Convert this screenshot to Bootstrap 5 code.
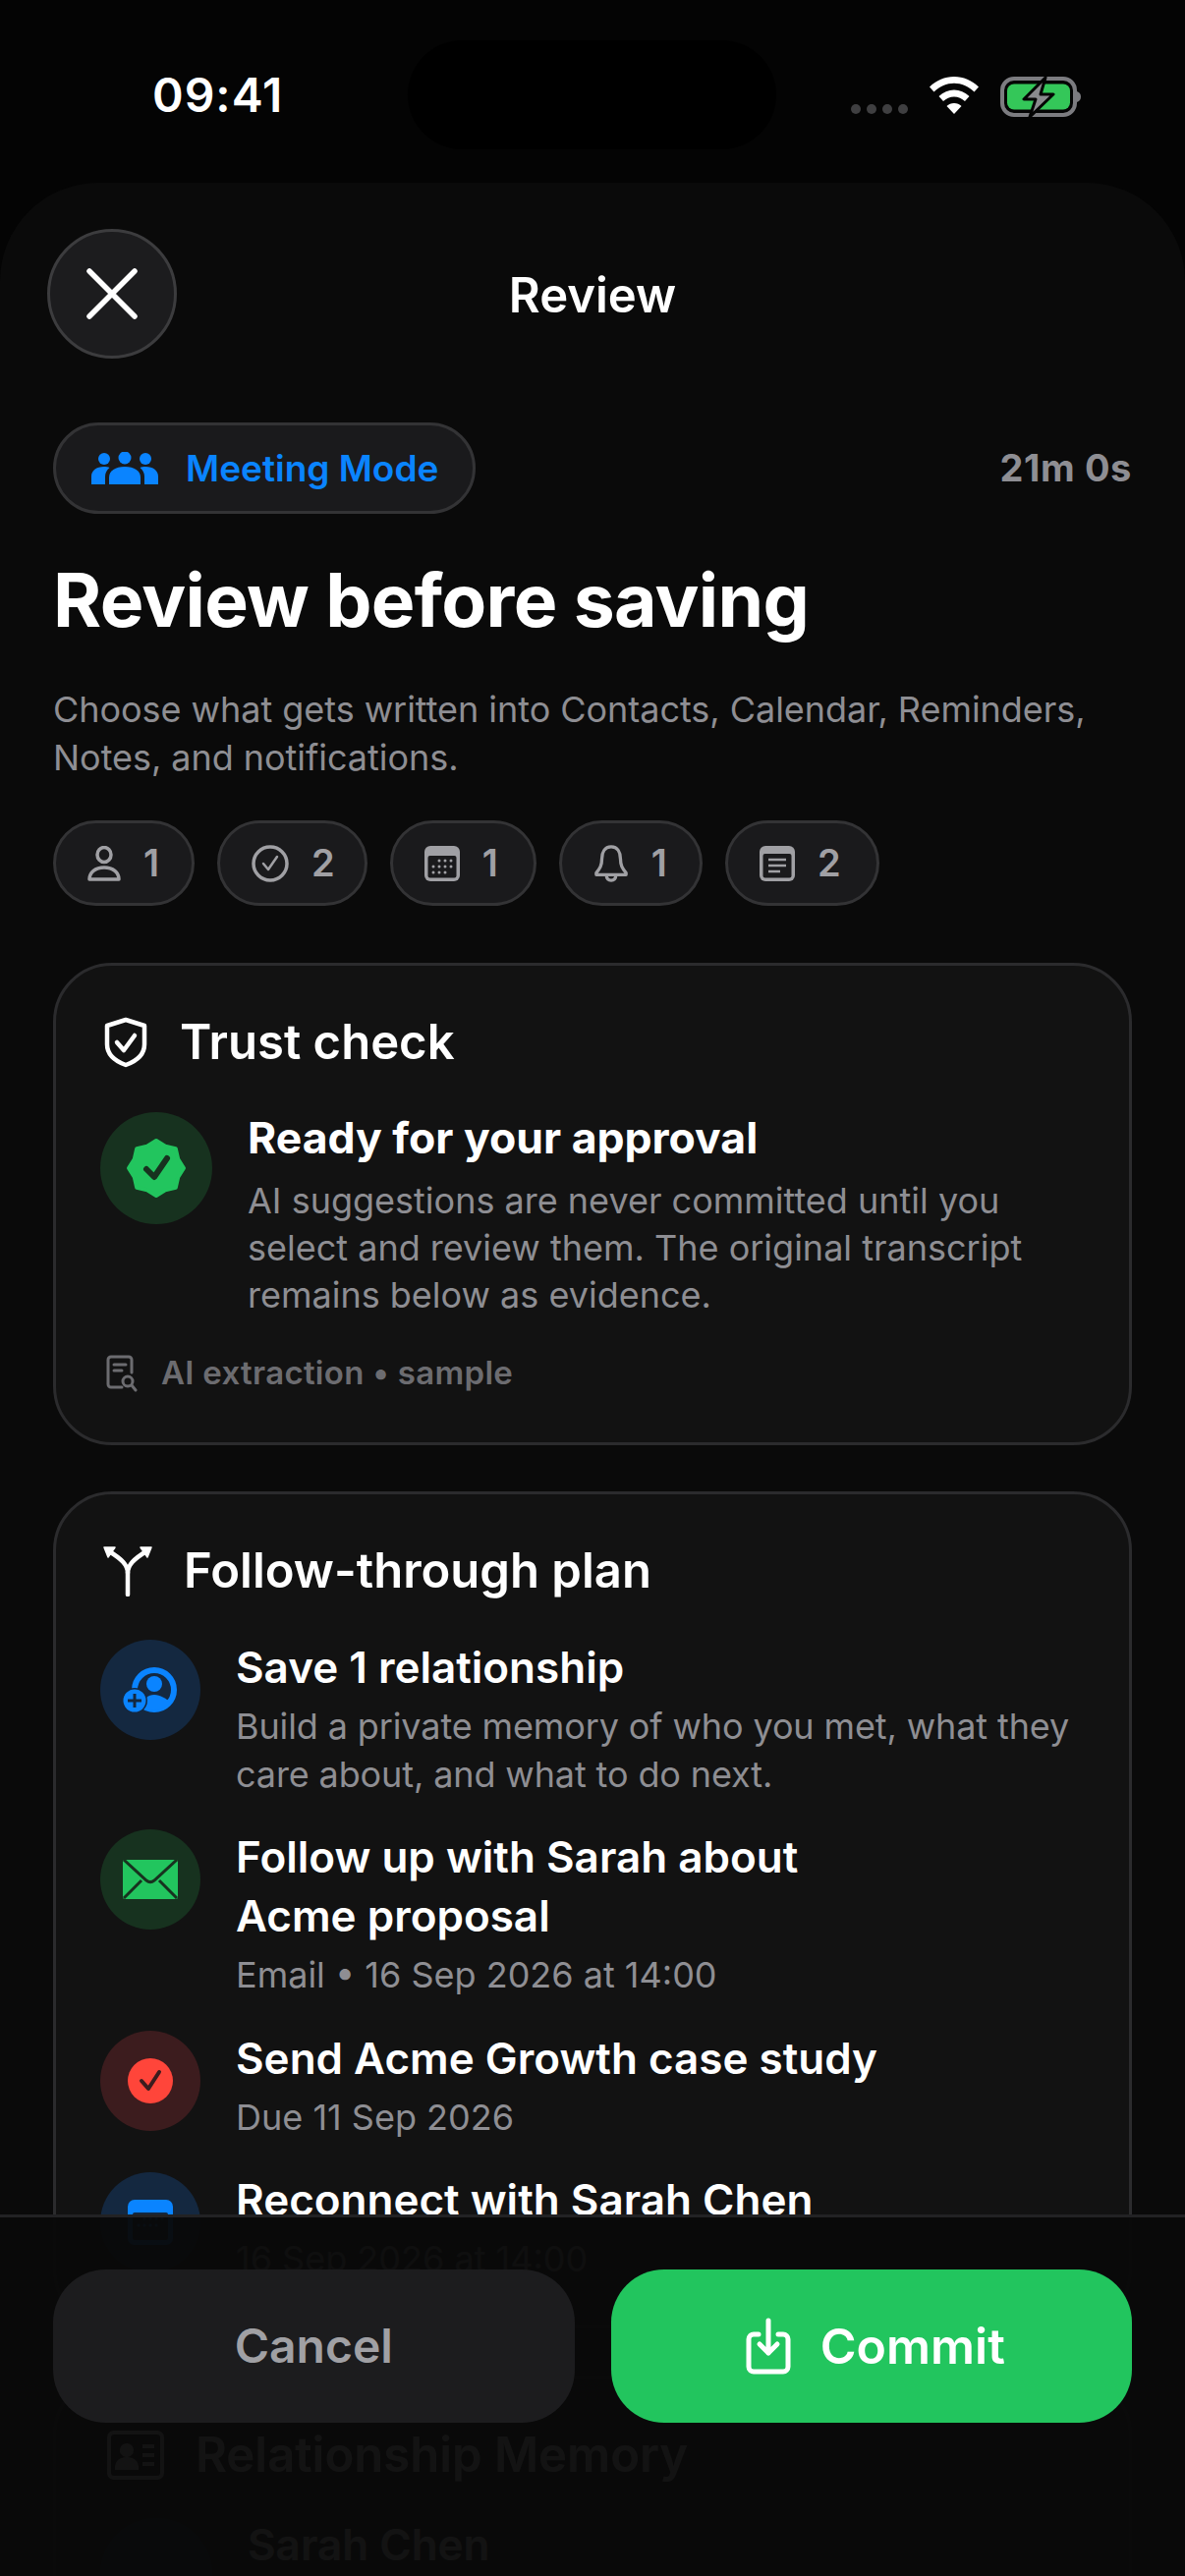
<!DOCTYPE html>
<html lang="en">
<head>
    <meta charset="UTF-8">
    <meta name="viewport" content="width=device-width, initial-scale=1.0">
    <title>Review</title>
    <link href="https://cdn.jsdelivr.net/npm/bootstrap@5.3.1/dist/css/bootstrap.min.css" rel="stylesheet">
    <style>
        html, body { height: 100%; margin: 0; background: #040404; }
        body { font-family: Inter, "Liberation Sans", sans-serif; color: #fff; }
        .app-frame { position: relative; height: 2622px; overflow: hidden; background: #040404; }
        .status-row { height: 186px; padding: 77px 106px 0 155px; align-items: flex-start; }
        .status-time { font-size: 48px; font-weight: 600; line-height: 40px; letter-spacing: 1px; }
        .island { position: absolute; left: 415px; top: 41px; width: 375px; height: 111px; border-radius: 56px; background: #000; }
        .status-icons { gap: 22px; margin-top: 1px; }
        .sheet { background: #0a0a0a; border-radius: 100px 100px 0 0; padding: 47px 54px 0; min-height: 2436px; }
        .sheet-head { position: relative; height: 132px; }
        .close-round { width: 132px; height: 132px; margin-left: -6px; border-radius: 50%; background: #1c1c1e; border: 3px solid #3c3c3e; padding: 0; }
        .sheet-title { position: absolute; left: 0; right: 0; top: 40px; text-align: center; font-size: 49px; line-height: 56px; font-weight: 600; }
        .mode-row { margin-top: 65px; }
        .mode-pill { height: 93px; width: 430px; padding: 0 36px; gap: 28px; border-radius: 47px; background: #1a1a1c; border: 3px solid #333335; color: #0a84ff; font-size: 37px; font-weight: 600; white-space: nowrap; }
        .timer-text { font-size: 38px; font-weight: 700; color: #8e8e93; letter-spacing: 0.6px; }
        .main-heading { margin: 45px 0 0 0; font-size: 75px; line-height: 86px; font-weight: 700; letter-spacing: -0.7px; color: #fff; }
        .sub-copy { margin: 44px 0 0 0; font-size: 36px; line-height: 48.5px; color: #8e8e93; letter-spacing: -0.04px; }
        .chip-row { margin-top: 40px; gap: 23px; }
        .count-chip { height: 87px; padding: 0 33px 0 32px; gap: 23px; border-radius: 44px; background: #1a1a1c; border: 3px solid #333335; color: #a0a0a4; font-size: 38px; font-weight: 600; }
        .chip-snug { padding-right: 30px; }
        .chip-roomy { padding-right: 36px; }
        .panel { background: #121212; border: 3px solid #2b2b2d; border-radius: 60px; padding: 46px 48px 0; }
        .panel-one { margin-top: 58px; height: 491px; }
        .panel-two { margin-top: 47px; height: 852px; }
        .panel-three { margin-top: 48px; height: 400px; }
        .panel-head { height: 64px; gap: 32px; font-size: 49px; font-weight: 600; white-space: nowrap; }
        .ready-row { margin-top: 39px; margin-left: -3px; gap: 36px; }
        .tint-round { flex: none; border-radius: 50%; display: flex; align-items: center; justify-content: center; }
        .round-lg { width: 114px; height: 114px; }
        .round-md { width: 102px; height: 102px; }
        .tint-green { background: #17321f; }
        .tint-blue { background: #142840; }
        .tint-red { background: #3c1c1e; }
        .ready-title { font-size: 44.5px; line-height: 52px; font-weight: 700; }
        .ready-copy { margin-top: 14px; font-size: 36px; line-height: 48px; color: #8e8e93; letter-spacing: 0; }
        .source-row { margin-top: 31px; gap: 24px; padding-left: 3px; font-size: 33px; font-weight: 600; color: #6c6c70; letter-spacing: 0.3px; }
        .plan-list { margin-top: 38px; margin-left: -3px; gap: 32px; }
        .plan-item { gap: 36px; }
        .plan-text { margin-top: -2px; }
        .plan-title { font-size: 44px; line-height: 60px; font-weight: 600; }
        .plan-copy { margin-top: 6px; font-size: 36px; line-height: 48.5px; color: #8e8e93; letter-spacing: 0; white-space: nowrap; }
        .copy-tight { letter-spacing: -0.12px; }
        .memory-list { margin-top: 32px; }
        .memory-name { line-height: 50px; margin-top: 2px; }
        .action-bar { position: absolute; left: 0; right: 0; bottom: 0; height: 368px; padding: 53px 54px 0; gap: 37px; background: rgba(9, 9, 9, 0.96); border-top: 3px solid #222224; }
        .action-btn { flex: 1 1 0; height: 156px; border: 0; border-radius: 54px; font-size: 50px; font-weight: 600; }
        .action-cancel { background: #1c1c1e; color: #a0a0a4; font-size: 48px; }
        .action-cancel:hover { background: #1c1c1e; color: #a0a0a4; }
        .action-commit { background: #22c55e; color: #fff; gap: 30px; }
        .action-commit:hover { background: #22c55e; color: #fff; }
    </style>
</head>

<body>
    <div class="app-frame">
        <div class="island"></div>
        <div class="status-row d-flex justify-content-between">
            <div class="status-time">09:41</div>
            <div class="status-icons d-flex align-items-start">
                <svg width="58" height="40" viewBox="0 0 58 40" fill="#3f3f41"><circle cx="5" cy="33" r="5"/><circle cx="21" cy="33" r="5"/><circle cx="37" cy="33" r="5"/><circle cx="53" cy="33" r="5"/></svg>
                <svg width="50" height="38" viewBox="0 0 50 38" fill="#fff"><path d="M25 0C15.500 0 7 3.800 0 10.500l4.500 5C10.500 9.700 17.500 6.700 25 6.700s14.500 3 20.500 8.800l4.500-5C43 3.800 34.500 0 25 0z"/><path d="M25 13.500c-5.800 0-11 2.300-15.500 6.500l4.500 5c3-2.800 6.800-4.600 11-4.600s8 1.800 11 4.600l4.500-5c-4.500-4.200-9.700-6.500-15.500-6.500z"/><path d="M25 27c-3 0-5.500 1-7.500 3L25 38l7.500-8c-2-2-4.500-3-7.500-3z"/></svg>
                <svg width="82" height="42" viewBox="0 0 82 42"><rect x="2" y="2" width="74" height="37" rx="12" fill="none" stroke="#7c7c80" stroke-width="4"/><rect x="7" y="7.500" width="64" height="26" rx="7" fill="#34c759"/><path d="M78 15c3 1 4 3 4 5.500S81 25 78 26z" fill="#7c7c80"/><path d="M46 1 24 23h12l-6 18 24-23H41z" fill="#8a8a8e" stroke="#040404" stroke-width="3" stroke-linejoin="round"/></svg>
            </div>
        </div>

        <div class="sheet">
            <div class="sheet-head">
                <button class="close-round d-flex align-items-center justify-content-center" type="button" aria-label="Close">
                    <svg width="54" height="54" viewBox="0 0 54 54" fill="none" stroke="#fff" stroke-width="5.500" stroke-linecap="round"><path d="M4 4l46 46M50 4 4 50"/></svg>
                </button>
                <div class="sheet-title">Review</div>
            </div>

            <div class="mode-row d-flex align-items-center justify-content-between">
                <div class="mode-pill d-flex align-items-center">
                    <svg class="flex-shrink-0" width="68" height="34" viewBox="0 0 68 34" fill="#0a84ff"><circle cx="13" cy="7" r="6"/><circle cx="34" cy="6" r="6.500"/><circle cx="55" cy="7" r="6"/><path d="M0 33v-8c0-6 5-10 13-10 2 0 4 .3 5.500 1-3 2.500-4.500 5.500-4.500 9v8z"/><path d="M68 33v-8c0-6-5-10-13-10-2 0-4 .3-5.500 1 3 2.500 4.500 5.500 4.500 9v8z"/><path d="M18 33v-7c0-7 6.500-11 16-11s16 4 16 11v7z"/></svg>
                    <span>Meeting Mode</span>
                </div>
                <div class="timer-text">21m 0s</div>
            </div>

            <h1 class="main-heading">Review before saving</h1>
            <p class="sub-copy mb-0">Choose what gets written into Contacts, Calendar, Reminders,<br>Notes, and notifications.</p>

            <div class="chip-row d-flex">
                <div class="count-chip d-flex align-items-center">
                    <svg width="34" height="36" viewBox="0 0 34 36" fill="none" stroke="#a0a0a4" stroke-width="3.500"><ellipse cx="17" cy="9" rx="7" ry="7.500"/><path d="M2 34c0-7 6-12 15-12s15 5 15 12z" stroke-linejoin="round"/></svg>
                    <span>1</span>
                </div>
                <div class="count-chip chip-snug d-flex align-items-center">
                    <svg width="38" height="38" viewBox="0 0 38 38" fill="none" stroke="#a0a0a4"><circle cx="19" cy="19" r="17" stroke-width="3.500"/><path d="M12 19l5 6 9-13" stroke-width="2.500" stroke-linecap="round" stroke-linejoin="round"/></svg>
                    <span>2</span>
                </div>
                <div class="count-chip chip-roomy d-flex align-items-center">
                    <svg width="36" height="36" viewBox="0 0 36 36"><rect width="36" height="36" rx="6" fill="#a0a0a4"/><rect x="3.500" y="10" width="29" height="22.500" rx="2" fill="#1a1a1c"/><g fill="#a0a0a4"><circle cx="15" cy="15" r="1.500"/><circle cx="21" cy="15" r="1.500"/><circle cx="27" cy="15" r="1.500"/><circle cx="9" cy="21" r="1.500"/><circle cx="15" cy="21" r="1.500"/><circle cx="21" cy="21" r="1.500"/><circle cx="27" cy="21" r="1.500"/><circle cx="9" cy="27" r="1.500"/><circle cx="15" cy="27" r="1.500"/><circle cx="21" cy="27" r="1.500"/></g></svg>
                    <span>1</span>
                </div>
                <div class="count-chip d-flex align-items-center">
                    <svg width="36" height="40" viewBox="0 0 38 40" fill="none" stroke="#a0a0a4" stroke-width="3.500" stroke-linejoin="round"><path d="M19 2c-7 0-10 6-10 13 0 7-2 10-6 15v2h32v-2c-4-5-6-8-6-15 0-7-3-13-10-13z"/><path d="M14 33c0 3 2 5 5 5s5-2 5-5"/></svg>
                    <span>1</span>
                </div>
                <div class="count-chip chip-roomy d-flex align-items-center">
                    <svg width="36" height="36" viewBox="0 0 36 36"><rect width="36" height="36" rx="6" fill="#a0a0a4"/><rect x="3.500" y="8" width="29" height="24.500" rx="2" fill="#1a1a1c"/><path d="M9 14h18M9 20h18M9 26h12" stroke="#a0a0a4" stroke-width="2.500"/></svg>
                    <span>2</span>
                </div>
            </div>

            <div class="panel panel-one">
                <div class="panel-head d-flex align-items-center">
                    <svg width="46" height="52" viewBox="0 0 46 52" fill="none" stroke="#fff" stroke-width="4.500" stroke-linejoin="round" stroke-linecap="round"><path d="M23 3 42 9v19c0 10-8 17-19 21C12 45 4 38 4 28V9z"/><path d="M14 26l7 8 11-15"/></svg>
                    <span>Trust check</span>
                </div>
                <div class="ready-row d-flex">
                    <div class="tint-round round-lg tint-green">
                        <svg width="62" height="62" viewBox="0 0 62 62"><path d="M31 3l9.200 5.800 10.600 2.400 2.400 10.600L59 31l-5.800 9.200-2.400 10.600-10.600 2.400L31 59l-9.200-5.800-10.600-2.400-2.400-10.600L3 31l5.800-9.200 2.400-10.600 10.600-2.400z" fill="#22c55e" stroke="#22c55e" stroke-width="4" stroke-linejoin="round"/><path d="M21 32l8 8 13-19" fill="none" stroke="#17321f" stroke-width="6" stroke-linecap="round" stroke-linejoin="round"/></svg>
                    </div>
                    <div>
                        <div class="ready-title">Ready for your approval</div>
                        <div class="ready-copy">AI suggestions are never committed until you<br>select and review them. The original transcript<br>remains below as evidence.</div>
                    </div>
                </div>
                <div class="source-row d-flex align-items-center">
                    <svg width="32" height="38" viewBox="0 0 32 38" fill="none" stroke="#6c6c70" stroke-width="3" stroke-linecap="round"><path d="M16 33H5a3 3 0 0 1-3-3V5a3 3 0 0 1 3-3h18a3 3 0 0 1 3 3v13"/><path d="M8 10h12M8 16h8"/><circle cx="22" cy="27" r="5"/><path d="M26 31l4 5"/></svg>
                    <span>AI extraction • sample</span>
                </div>
            </div>

            <div class="panel panel-two">
                <div class="panel-head d-flex align-items-center">
                    <svg width="50" height="52" viewBox="0 0 50 52" fill="none" stroke="#fff" stroke-width="4.500" stroke-linecap="round" stroke-linejoin="round"><path d="M25 50V28C25 20 19 14 6 6"/><path d="M25 28C25 20 31 14 44 6"/><path d="M1 2h11L5 12zM49 2H38l7 10z" fill="#fff" stroke-width="1.500"/></svg>
                    <span>Follow-through plan</span>
                </div>
                <div class="plan-list d-flex flex-column">
                    <div class="plan-item d-flex">
                        <div class="tint-round round-md tint-blue">
                            <svg width="56" height="48" viewBox="0 0 56 48"><circle cx="32" cy="24" r="20" fill="none" stroke="#0a84ff" stroke-width="6"/><circle cx="32" cy="18" r="8" fill="#0a84ff"/><path d="M18 42c2-9 8-13 14-13s12 4 16 7c-4 5-10 9-16 9-5 0-10-1-14-3z" fill="#0a84ff"/><circle cx="12" cy="35" r="13" fill="#142840"/><circle cx="12" cy="35" r="11.500" fill="#0a84ff"/><path d="M12 28v14M5 35h14" stroke="#142840" stroke-width="3"/></svg>
                        </div>
                        <div class="plan-text">
                            <div class="plan-title">Save 1 relationship</div>
                            <div class="plan-copy copy-tight">Build a private memory of who you met, what they<br>care about, and what to do next.</div>
                        </div>
                    </div>
                    <div class="plan-item d-flex">
                        <div class="tint-round round-md tint-green">
                            <svg width="56" height="40" viewBox="0 0 56 40"><rect width="56" height="40" rx="2" fill="#22c55e"/><path d="M1 0l23 21c2.500 2 5.500 2 8 0L55 0M1 39l18-18M55 39 37 21" fill="none" stroke="#17321f" stroke-width="3"/></svg>
                        </div>
                        <div class="plan-text">
                            <div class="plan-title">Follow up with Sarah about<br>Acme proposal</div>
                            <div class="plan-copy">Email • 16 Sep 2026 at 14:00</div>
                        </div>
                    </div>
                    <div class="plan-item d-flex">
                        <div class="tint-round round-md tint-red">
                            <svg width="46" height="46" viewBox="0 0 46 46"><circle cx="23" cy="23" r="23" fill="#ff453a"/><path d="M14 23l7 8 11-17" fill="none" stroke="#3c1c1e" stroke-width="4" stroke-linecap="round" stroke-linejoin="round"/></svg>
                        </div>
                        <div class="plan-text">
                            <div class="plan-title">Send Acme Growth case study</div>
                            <div class="plan-copy">Due 11 Sep 2026</div>
                        </div>
                    </div>
                    <div class="plan-item d-flex">
                        <div class="tint-round round-md tint-blue">
                            <svg width="46" height="46" viewBox="0 0 46 46"><rect width="46" height="46" rx="7" fill="#0a84ff"/><rect x="5" y="13" width="36" height="28" rx="2" fill="#142840"/><g fill="#0a84ff"><circle cx="17" cy="19" r="1.500"/><circle cx="23" cy="19" r="1.500"/><circle cx="29" cy="19" r="1.500"/><circle cx="35" cy="19" r="1.500"/><circle cx="11" cy="26" r="1.500"/><circle cx="17" cy="26" r="1.500"/><circle cx="23" cy="26" r="1.500"/><circle cx="29" cy="26" r="1.500"/></g></svg>
                        </div>
                        <div class="plan-text">
                            <div class="plan-title">Reconnect with Sarah Chen</div>
                            <div class="plan-copy">16 Sep 2026 at 14:00</div>
                        </div>
                    </div>
                </div>
            </div>

            <div class="panel panel-three">
                <div class="panel-head d-flex align-items-center">
                    <svg class="ms-1" width="58" height="50" viewBox="0 0 58 50" fill="none" stroke="#fff" stroke-width="4"><rect x="2" y="2" width="54" height="46" rx="5"/><circle cx="20" cy="20" r="5" fill="#fff"/><path d="M10 38c0-6 4-9 10-9s10 3 10 9z" fill="#fff"/><path d="M36 16h12M36 25h12M36 34h12"/></svg>
                    <span>Relationship Memory</span>
                </div>
                <div class="plan-list memory-list d-flex">
                    <div class="plan-item d-flex">
                        <div class="tint-round round-lg tint-blue"></div>
                        <div class="plan-title memory-name">Sarah Chen</div>
                    </div>
                </div>
            </div>
        </div>

        <div class="action-bar d-flex align-items-start">
            <button class="btn action-btn action-cancel" type="button">Cancel</button>
            <button class="btn action-btn action-commit d-flex align-items-center justify-content-center" type="button">
                <svg class="ms-2" width="46" height="58" viewBox="0 0 46 58" fill="none" stroke="#fff" stroke-width="5" stroke-linecap="round" stroke-linejoin="round"><path d="M13 17H8a5 5 0 0 0-5 5v28a5 5 0 0 0 5 5h30a5 5 0 0 0 5-5V22a5 5 0 0 0-5-5h-5"/><path d="M23 3v33M14 27l9 9 9-9"/></svg>
                <span>Commit</span>
            </button>
        </div>
    </div>

    <script src="https://cdn.jsdelivr.net/npm/bootstrap@5.3.1/dist/js/bootstrap.bundle.min.js"></script>
</body>
</html>
